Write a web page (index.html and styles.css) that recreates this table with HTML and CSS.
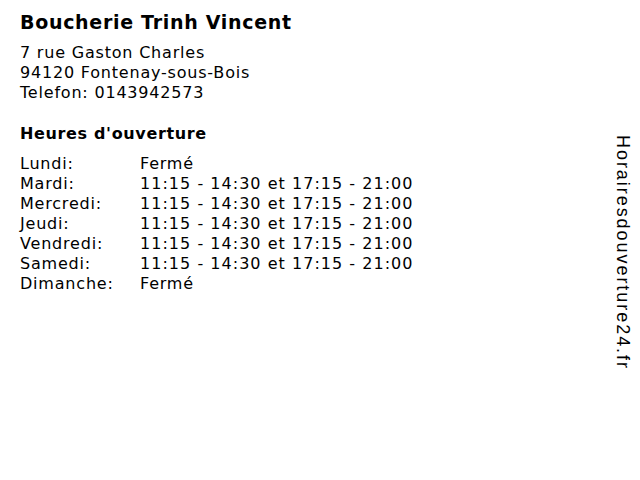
FILE: index.html
```html
<!DOCTYPE html>
<html>
<head>
<meta charset="utf-8">
<link rel="stylesheet" href="styles.css">
</head>
<body>
<div class="page">
  <main class="main">
    <h1 class="title">Boucherie Trinh Vincent</h1>
    <div class="address">
      <div>7 rue Gaston Charles</div>
      <div>94120 Fontenay-sous-Bois</div>
      <div>Telefon: 0143942573</div>
    </div>
    <h2 class="heading">Heures d'ouverture</h2>
    <div class="hours">
      <span>Lundi:</span><span>Fermé</span>
      <span>Mardi:</span><span class="time">11:15 - 14:30 et 17:15 - 21:00</span>
      <span>Mercredi:</span><span class="time">11:15 - 14:30 et 17:15 - 21:00</span>
      <span>Jeudi:</span><span class="time">11:15 - 14:30 et 17:15 - 21:00</span>
      <span>Vendredi:</span><span class="time">11:15 - 14:30 et 17:15 - 21:00</span>
      <span>Samedi:</span><span class="time">11:15 - 14:30 et 17:15 - 21:00</span>
      <span>Dimanche:</span><span>Fermé</span>
    </div>
  </main>
  <aside class="side">Horairesdouverture24.fr</aside>
</div>
</body>
</html>
```
FILE: styles.css
```css
html, body {
  margin: 0;
  padding: 0;
  background: #fff;
}
body {
  width: 640px;
  height: 480px;
  font-family: "DejaVu Sans", Verdana, sans-serif;
  color: #000;
  font-size: 16px;
  letter-spacing: 0.8px;
}
.page {
  display: flex;
  justify-content: space-between;
  height: 480px;
}
.main {
  padding: 10px 0 0 20px;
}
.title {
  margin: 0;
  font-size: 19px;
  font-weight: bold;
  line-height: 24px;
  letter-spacing: 0.7px;
}
.address {
  margin-top: 9px;
  line-height: 20px;
}
.heading {
  margin: 21px 0 0 0;
  font-size: 16px;
  font-weight: bold;
  line-height: 20px;
  letter-spacing: 0.65px;
}
.hours {
  margin-top: 10px;
  display: grid;
  grid-template-columns: 120px auto;
  line-height: 20px;
}
.time {
  letter-spacing: 1.03px;
}
.side {
  writing-mode: vertical-rl;
  font-family: "Liberation Sans", Arial, sans-serif;
  font-size: 18px;
  letter-spacing: 1.95px;
  padding: 135px 7px 0 0;
  line-height: 20px;
}
```
